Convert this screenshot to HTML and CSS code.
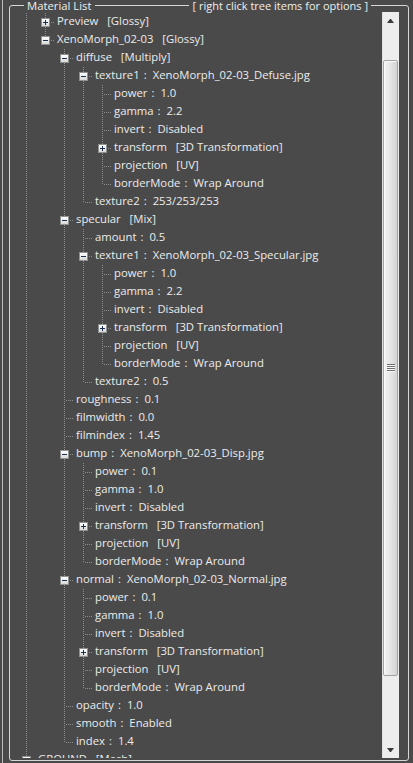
FILE: index.html
```html
<!DOCTYPE html>
<html lang="en">
<head>
    <meta charset="UTF-8">
    <meta name="viewport" content="width=device-width, initial-scale=1.0">
    <title>Material List</title>

    <link rel="stylesheet" href="styles.css">
</head>
<body>
    <div class="panel">
        <fieldset class="group">
            <legend>
                <div class="group-title">
                    <span class="title-text">Material List</span>
                    <span class="title-rule"></span>
                    <span class="title-text hint">[ right click tree items for options ]</span>
                </div>
            </legend>

            <div class="treeview">
                <ul class="tree" id="material-tree"></ul>

                <div class="scrollbar">
                    <div class="sb-button"><span class="arrow-up"></span></div>
                    <div class="sb-track">
                        <div class="sb-thumb"><span class="grip"></span></div>
                    </div>
                    <div class="sb-button"><span class="arrow-down"></span></div>
                </div>
            </div>
        </fieldset>
    </div>

    <script>
        // every image map has the same set of options
        function imageProps(power, gamma) {
            return [
                { name: 'power', value: power },
                { name: 'gamma', value: gamma },
                { name: 'invert', value: 'Disabled' },
                { name: 'transform', type: '3D Transformation', closed: true },
                { name: 'projection', type: 'UV' },
                { name: 'borderMode', value: 'Wrap Around' }
            ];
        }

        const materials = [
            { name: 'Preview', type: 'Glossy', closed: true },
            { name: 'XenoMorph_02-03', type: 'Glossy', children: [
                { name: 'diffuse', type: 'Multiply', children: [
                    { name: 'texture1', value: 'XenoMorph_02-03_Defuse.jpg', children: imageProps('1.0', '2.2') },
                    { name: 'texture2', value: '253/253/253' }
                ]},
                { name: 'specular', type: 'Mix', children: [
                    { name: 'amount', value: '0.5' },
                    { name: 'texture1', value: 'XenoMorph_02-03_Specular.jpg', children: imageProps('1.0', '2.2') },
                    { name: 'texture2', value: '0.5' }
                ]},
                { name: 'roughness', value: '0.1' },
                { name: 'filmwidth', value: '0.0' },
                { name: 'filmindex', value: '1.45' },
                { name: 'bump', value: 'XenoMorph_02-03_Disp.jpg', children: imageProps('0.1', '1.0') },
                { name: 'normal', value: 'XenoMorph_02-03_Normal.jpg', children: imageProps('0.1', '1.0') },
                { name: 'opacity', value: '1.0' },
                { name: 'smooth', value: 'Enabled' },
                { name: 'index', value: '1.4' }
            ]}
        ];

        const meshes = [
            { name: 'GROUND', type: 'Mesh', closed: true }
        ];

        function guide(kind) {
            const cell = document.createElement('span');
            cell.className = 'guide ' + kind;
            return cell;
        }

        function makeLabel(node) {
            const label = document.createElement('span');
            label.className = 'label';
            label.append(node.name);

            if (node.value) {
                const sep = document.createElement('span');
                sep.className = 'sep';
                sep.textContent = ':';
                label.append(sep, node.value);
            }
            if (node.type) {
                label.append('   [' + node.type + ']');
            }
            return label;
        }

        function addRows(list, nodes, guides) {
            nodes.forEach((node, i) => {
                const last = i === nodes.length - 1;
                const row = document.createElement('li');
                row.className = 'node';

                guides.forEach(open => row.appendChild(guide(open ? 'pipe' : 'blank')));

                const joint = guide(last ? 'elbow' : 'tee');
                if (node.closed || node.children) {
                    const box = document.createElement('span');
                    box.className = 'expander ' + (node.children ? 'open' : 'closed');
                    joint.appendChild(box);
                }
                row.appendChild(joint);
                row.appendChild(makeLabel(node));
                list.appendChild(row);

                if (node.children) {
                    addRows(list, node.children, guides.concat(!last));
                }
            });
        }

        const tree = document.getElementById('material-tree');
        // the materials root sits above the visible rows, the mesh root follows it
        addRows(tree, materials, [true]);
        addRows(tree, meshes, []);
    </script>
</body>
</html>
```

FILE: styles.css
```css
:root {
    --dot: #8d8d8d;
    --vline: repeating-linear-gradient(to bottom, var(--dot) 0 1px, transparent 1px 2px);
    --hline: repeating-linear-gradient(to right, var(--dot) 0 1px, transparent 1px 2px);
}

html, body {
    margin: 0;
    height: 763px;
    overflow: hidden;
}

body {
    background-color: #4a4a4a;
    font-family: 'Open Sans', 'Noto Sans', sans-serif;
    font-size: 11.3px;
    color: #ececec;
}

.panel {
    margin-left: 2px;
    height: 763px;
    padding-left: 6px;
    border-left: 1px solid #bdbdbd;
}

/* group box */

.group {
    box-sizing: border-box;
    width: 400px;
    min-width: 0;
    margin: 0;
    padding: 1px 9px 2px 0;
    border: 1px solid #d6d6d6;
    border-radius: 3px;
}

.group legend {
    margin-left: 14px;
    padding: 0;
}

.group-title {
    display: flex;
    align-items: center;
    width: 347px;
    height: 11px;
    line-height: 11px;
}

.title-text {
    padding: 0 3px;
    white-space: pre;
    color: #eeeeee;
}

.title-text.hint {
    font-size: 11px;
}

.title-rule {
    flex: 1;
    height: 1px;
    background-color: #d6d6d6;
}

/* tree view */

.treeview {
    display: flex;
    height: 746px;
}

.tree {
    flex: 1;
    margin: 0;
    padding: 1px 0 0 7px;
    list-style: none;
    overflow: hidden;
}

.node {
    display: flex;
    height: 18px;
}

.guide {
    flex: none;
    width: 19px;
    height: 18px;
}

.guide.pipe {
    background: var(--vline) 9px 0 / 1px 18px no-repeat;
}

.guide.tee {
    background: var(--vline) 9px 0 / 1px 18px no-repeat,
                var(--hline) 11px 9px / 8px 1px no-repeat;
}

.guide.elbow {
    background: var(--vline) 9px 0 / 1px 10px no-repeat,
                var(--hline) 11px 9px / 8px 1px no-repeat;
}

.expander {
    display: block;
    box-sizing: border-box;
    width: 9px;
    height: 9px;
    margin: 5px 0 0 5px;
    border: 1px solid #8f9090;
}

.expander.open {
    background: linear-gradient(#1c2f52, #1c2f52) center / 5px 1px no-repeat,
                linear-gradient(#ffffff, #d8d8d8);
}

.expander.closed {
    background: linear-gradient(#1c2f52, #1c2f52) center / 5px 1px no-repeat,
                linear-gradient(#1c2f52, #1c2f52) center / 1px 5px no-repeat,
                linear-gradient(#ffffff, #d8d8d8);
}

.label {
    align-self: flex-start;
    padding-left: 2px;
    line-height: 15px;
    white-space: pre;
}

.sep {
    padding: 0 6px 0 4px;
}

/* vertical scrollbar */

.scrollbar {
    flex: none;
    display: flex;
    flex-direction: column;
    width: 17px;
    background-color: #ededed;
    box-shadow: inset 1px 0 0 #e2e2e2;
}

.sb-button {
    display: flex;
    align-items: center;
    justify-content: center;
    height: 17px;
}

.arrow-up,
.arrow-down {
    width: 1px;
    border-left: 3px solid transparent;
    border-right: 3px solid transparent;
}

.arrow-up {
    border-bottom: 4px solid #3a3a3a;
}

.arrow-down {
    border-top: 4px solid #3a3a3a;
}

.sb-track {
    flex: 1;
    padding-top: 31px;
}

.sb-thumb {
    display: flex;
    align-items: center;
    justify-content: center;
    box-sizing: border-box;
    height: 616px;
    margin: 0 1px;
    border: 1px solid #a2a2a2;
    border-radius: 2px;
    background: linear-gradient(to right, #f4f4f4, #e7e7e7 45%, #d3d3d3);
    box-shadow: inset 1px 1px 0 #fbfbfb;
}

.grip {
    width: 8px;
    height: 8px;
    background: repeating-linear-gradient(to bottom, #6e6e6e 0 1px, #fafafa 1px 2px);
}
```
